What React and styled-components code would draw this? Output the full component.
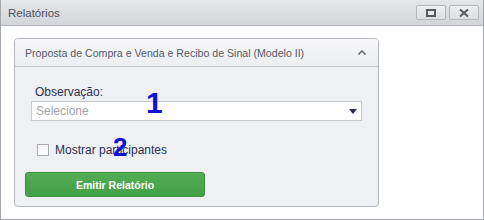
import React from 'react';
import styled, { createGlobalStyle } from 'styled-components';

const Global = createGlobalStyle`
  html, body { margin: 0; padding: 0; background: #ffffff; }
  body { font-family: "Liberation Sans", Arial, sans-serif; }
`;

const Window = styled.div`
  position: relative;
  width: 484px;
  height: 220px;
  box-sizing: border-box;
  border: 1px solid #a4a7ae;
  border-top: none;
  background: #ffffff;
  display: flex;
  flex-direction: column;
`;

const TitleBar = styled.div`
  height: 26px;
  box-sizing: border-box;
  display: flex;
  align-items: center;
  justify-content: space-between;
  padding: 0 4px 0 7px;
  background: linear-gradient(#e6e7ea, #d3d5da);
  border-bottom: 1px solid #aeb1b8;
`;

const Title = styled.span`
  font-family: "Liberation Sans", Arial, sans-serif;
  font-size: 11.5px;
  color: #4b4f5c;
`;

const TitleButtons = styled.div`
  display: flex;
  gap: 3px;
`;

const TitleButton = styled.button`
  width: 30px;
  height: 15px;
  padding: 0;
  box-sizing: border-box;
  border: 1px solid #b4b7be;
  border-radius: 2px;
  background: linear-gradient(#eeeff1, #dcdee2);
  display: flex;
  align-items: center;
  justify-content: center;
`;

const Content = styled.div`
  flex: 1;
  padding: 12px 104px 12px 13px;
`;

const Panel = styled.div`
  height: 169px;
  box-sizing: border-box;
  border: 1px solid #b2b5bd;
  border-radius: 4px;
  background: #eff0f4;
  display: flex;
  flex-direction: column;
  overflow: hidden;
`;

const PanelHeader = styled.div`
  height: 28px;
  box-sizing: border-box;
  display: flex;
  align-items: center;
  justify-content: space-between;
  padding: 0 12px 0 10px;
  background: linear-gradient(#f7f7f9, #eceef1);
  border-bottom: 1px solid #c4c7cd;
`;

const PanelTitle = styled.span`
  font-family: "Liberation Sans", Arial, sans-serif;
  font-size: 10.6px;
  color: #555a64;
  margin-top: 1px;
`;

const PanelBody = styled.div`
  position: relative;
  flex: 1;
  padding: 17px 16px 0 10px;
  display: flex;
  flex-direction: column;
`;

const Label = styled.label`
  font-family: "Liberation Sans", Arial, sans-serif;
  font-size: 12px;
  color: #2c2f52;
  padding-left: 10px;
  height: 17px;
  line-height: 17px;
`;

const Select = styled.div`
  margin: 0 0 0 6px;
  height: 20px;
  box-sizing: border-box;
  border: 1px solid #c6c8cd;
  background: #ffffff;
  display: flex;
  align-items: center;
  justify-content: space-between;
  padding: 0 4px 0 4px;
`;

const Placeholder = styled.span`
  font-family: "Liberation Sans", Arial, sans-serif;
  font-size: 12px;
  color: #a3a4a8;
`;

const CheckRow = styled.div`
  margin-top: 23px;
  padding-left: 12px;
  display: flex;
  align-items: center;
  gap: 6px;
  height: 12px;
`;

const Box = styled.span`
  width: 12px;
  height: 12px;
  box-sizing: border-box;
  border: 1px solid #a9abb2;
  background: linear-gradient(#f4f4f6, #ffffff);
`;

const CheckLabel = styled.span`
  font-family: "Liberation Sans", Arial, sans-serif;
  font-size: 12px;
  color: #2c2f52;
`;

const Button = styled.button`
  margin-top: 16px;
  width: 180px;
  height: 25px;
  box-sizing: border-box;
  border: 1px solid #3b8d3e;
  border-radius: 3px;
  background: linear-gradient(#52ad55, #43a047);
  color: #ffffff;
  font-family: "Liberation Sans", Arial, sans-serif;
  font-weight: bold;
  font-size: 10.5px;
  padding: 0;
`;

const Marker = styled.span`
  position: absolute;
  left: ${p => p.x}px;
  top: ${p => p.y}px;
  font-family: "Liberation Sans", Arial, sans-serif;
  font-weight: bold;
  font-size: ${p => p.size}px;
  line-height: 1;
  color: #1010d8;
  pointer-events: none;
`;

export default function App() {
  return (
    <>
      <Global />
      <Window>
        <TitleBar>
          <Title>Relatórios</Title>
          <TitleButtons>
            <TitleButton>
              <svg width="10" height="8" viewBox="0 0 10 8">
                <rect x="1" y="1" width="8" height="6" fill="none" stroke="#555860" strokeWidth="2" />
              </svg>
            </TitleButton>
            <TitleButton>
              <svg width="10" height="8" viewBox="0 0 10 8">
                <path d="M1 0.5 L9 7.5 M9 0.5 L1 7.5" stroke="#555860" strokeWidth="2" />
              </svg>
            </TitleButton>
          </TitleButtons>
        </TitleBar>
        <Content>
          <Panel>
            <PanelHeader>
              <PanelTitle>Proposta de Compra e Venda e Recibo de Sinal (Modelo II)</PanelTitle>
              <svg width="8" height="5" viewBox="0 0 8 5">
                <path d="M0.5 4.5 L4 1 L7.5 4.5" fill="none" stroke="#6a6e78" strokeWidth="1.6" />
              </svg>
            </PanelHeader>
            <PanelBody>
              <Label>Observação:</Label>
              <Select>
                <Placeholder>Selecione</Placeholder>
                <svg width="8" height="5" viewBox="0 0 8 5">
                  <path d="M0 0 L8 0 L4 5 Z" fill="#2c2f52" />
                </svg>
              </Select>
              <CheckRow>
                <Box />
                <CheckLabel>Mostrar participantes</CheckLabel>
              </CheckRow>
              <Button>Emitir Relatório</Button>
              <Marker x={131} y={21} size={30}>1</Marker>
              <Marker x={98} y={67} size={26}>2</Marker>
            </PanelBody>
          </Panel>
        </Content>
      </Window>
    </>
  );
}
